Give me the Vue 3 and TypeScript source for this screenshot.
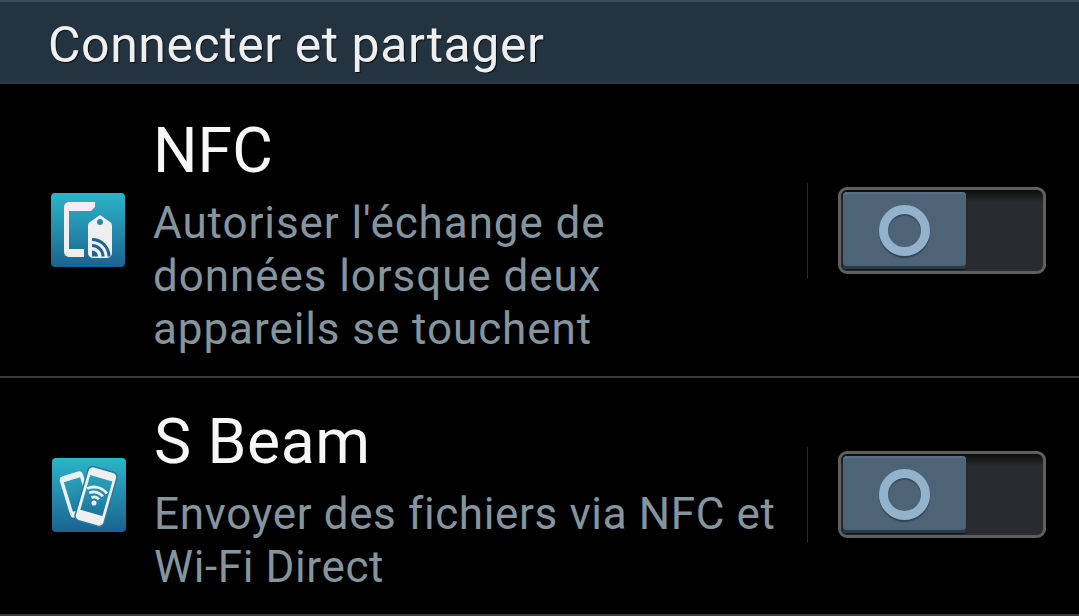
<template>
  <div class="screen">
    <header class="section-head">Connecter et partager</header>
    <div v-for="row in rows" :key="row.title" class="row" :class="row.cls">
      <div class="app-icon">
        <svg v-if="row.cls === 'nfc'" viewBox="0 0 74 74" width="74" height="74">
          <path d="M44 9H18a5 5 0 0 0-5 5v45a5 5 0 0 0 5 5h15v-8H18V18h22l4-4z" fill="#efefef" />
          <path d="M49 22l10 7c1.500 1 2 2 2 4v27a5 5 0 0 1-5 5H42a5 5 0 0 1-5-5V33c0-2 .5-3 2-4z" fill="#efefef" />
          <circle cx="49" cy="29" r="3" fill="#2788a6" />
          <g fill="none" stroke="#1b6590" stroke-width="3">
            <path d="M41 46.500a17 17 0 0 1 17 17" />
            <path d="M41 52.500a11 11 0 0 1 11 11" />
          </g>
          <path d="M41 57.500a6 6 0 0 1 6 6h-6z" fill="#1b6590" />
        </svg>
        <svg v-else viewBox="0 0 74 74" width="74" height="74">
          <defs>
            <linearGradient id="screen-fill" gradientUnits="userSpaceOnUse" x1="0" y1="0" x2="0" y2="74">
              <stop offset="0" stop-color="#2cb5c9" />
              <stop offset="1" stop-color="#1b6390" />
            </linearGradient>
          </defs>
          <g transform="rotate(-17 24.500 36.500)">
            <rect x="12.500" y="15" width="24" height="43" rx="4" fill="#efefef" />
            <rect x="16" y="21" width="17" height="31" fill="url(#screen-fill)" />
          </g>
          <g transform="rotate(16 44 38.500)">
            <rect x="29" y="10.500" width="30" height="56" rx="5" fill="#efefef" stroke="#247a9e" stroke-width="1.500" />
          </g>
          <polygon points="38.200,17.100 60.300,23.400 50.400,58 28.300,51.700" fill="url(#screen-fill)" />
          <g transform="rotate(14 42 45)" fill="none" stroke="#efefef" stroke-width="2.800">
            <path d="M38.200 40.400a6 6 0 0 1 7.600 0" />
            <path d="M35 36.500a11 11 0 0 1 14 0" />
            <path d="M31.800 32.700a16 16 0 0 1 20.400 0" />
          </g>
          <circle cx="42" cy="45" r="2.500" fill="#efefef" />
        </svg>
      </div>
      <div class="copy">
        <div class="title">{{ row.title }}</div>
        <div class="desc">
          <div v-for="line in row.lines" :key="line">{{ line }}</div>
        </div>
      </div>
      <div class="sep"></div>
      <div class="toggle">
        <div class="knob"><span class="ring"></span></div>
      </div>
    </div>
  </div>
</template>

<script setup lang="ts">
const rows = [
  {
    cls: 'nfc',
    title: 'NFC',
    lines: ["Autoriser l'échange de", 'données lorsque deux', 'appareils se touchent'],
  },
  {
    cls: 'beam',
    title: 'S Beam',
    lines: ['Envoyer des fichiers via NFC et', 'Wi-Fi Direct'],
  },
]
</script>

<style>
html, body {
  margin: 0;
  background: #000;
}
</style>

<style scoped>
.screen {
  width: 1079px;
  height: 616px;
  overflow: hidden;
  background: #000;
  font-family: Roboto, "Liberation Sans", sans-serif;
}
.section-head {
  box-sizing: border-box;
  height: 84px;
  padding: 15px 0 0 48px;
  font-size: 50px;
  line-height: 56px;
  letter-spacing: 0.55px;
  color: #efefef;
  background: #233340;
  border-top: 2px solid #3f4c5c;
  border-bottom: 2px solid #2e3c48;
  text-shadow: 1px 1px 1px #0a0f14;
}
.row {
  box-sizing: border-box;
  display: flex;
  align-items: flex-start;
  border-bottom: 2px solid #3a3a3a;
}
.row.nfc {
  height: 294px;
}
.row.beam {
  height: 238px;
}
.app-icon {
  flex: none;
  width: 74px;
  height: 74px;
  margin-left: 51px;
  border-radius: 4px;
  background: linear-gradient(#2cb5c9, #1b6390);
}
.nfc .app-icon {
  margin-top: 109px;
}
.beam .app-icon {
  margin-top: 80px;
  margin-left: 52px;
}
.copy {
  flex: none;
  width: 653px;
  margin-left: 28px;
}
.nfc .copy {
  width: 654px;
  padding-top: 32px;
}
.beam .copy {
  padding-top: 29px;
}
.title {
  font-size: 62.500px;
  line-height: 70px;
  color: #f7f7f7;
}
.beam .title {
  letter-spacing: 0.5px;
}
.desc {
  margin-top: 11px;
  font-size: 44px;
  line-height: 53px;
  letter-spacing: 0.92px;
  color: #85949d;
}
.beam .desc {
  letter-spacing: 0.62px;
}
.sep {
  flex: none;
  width: 1px;
  height: 96px;
  background: #2e2e2e;
}
.nfc .sep {
  margin-top: 99px;
}
.beam .sep {
  margin-top: 69px;
}
.toggle {
  box-sizing: border-box;
  flex: none;
  width: 208px;
  height: 87px;
  margin-left: 30px;
  padding: 2px;
  border: 3px solid #5f5f5f;
  border-radius: 9px;
  background: linear-gradient(#0c0c0e 0, #2a2b2f 12px);
}
.nfc .toggle {
  margin-top: 103px;
}
.beam .toggle {
  margin-top: 73px;
}
.knob {
  display: flex;
  align-items: center;
  justify-content: center;
  width: 123px;
  height: 77px;
  border-radius: 4px;
  background: #4d6476;
  box-shadow: inset 0 2px 0 #577085, inset 0 -3px 0 #2b3a46, 0 1px 1px #111;
}
.ring {
  box-sizing: border-box;
  width: 51px;
  height: 51px;
  border: 9px solid #93b3cd;
  border-radius: 50%;
  box-shadow: 0 2px 1px #33444f, inset 0 2px 1px #3a4e5e;
}
</style>
